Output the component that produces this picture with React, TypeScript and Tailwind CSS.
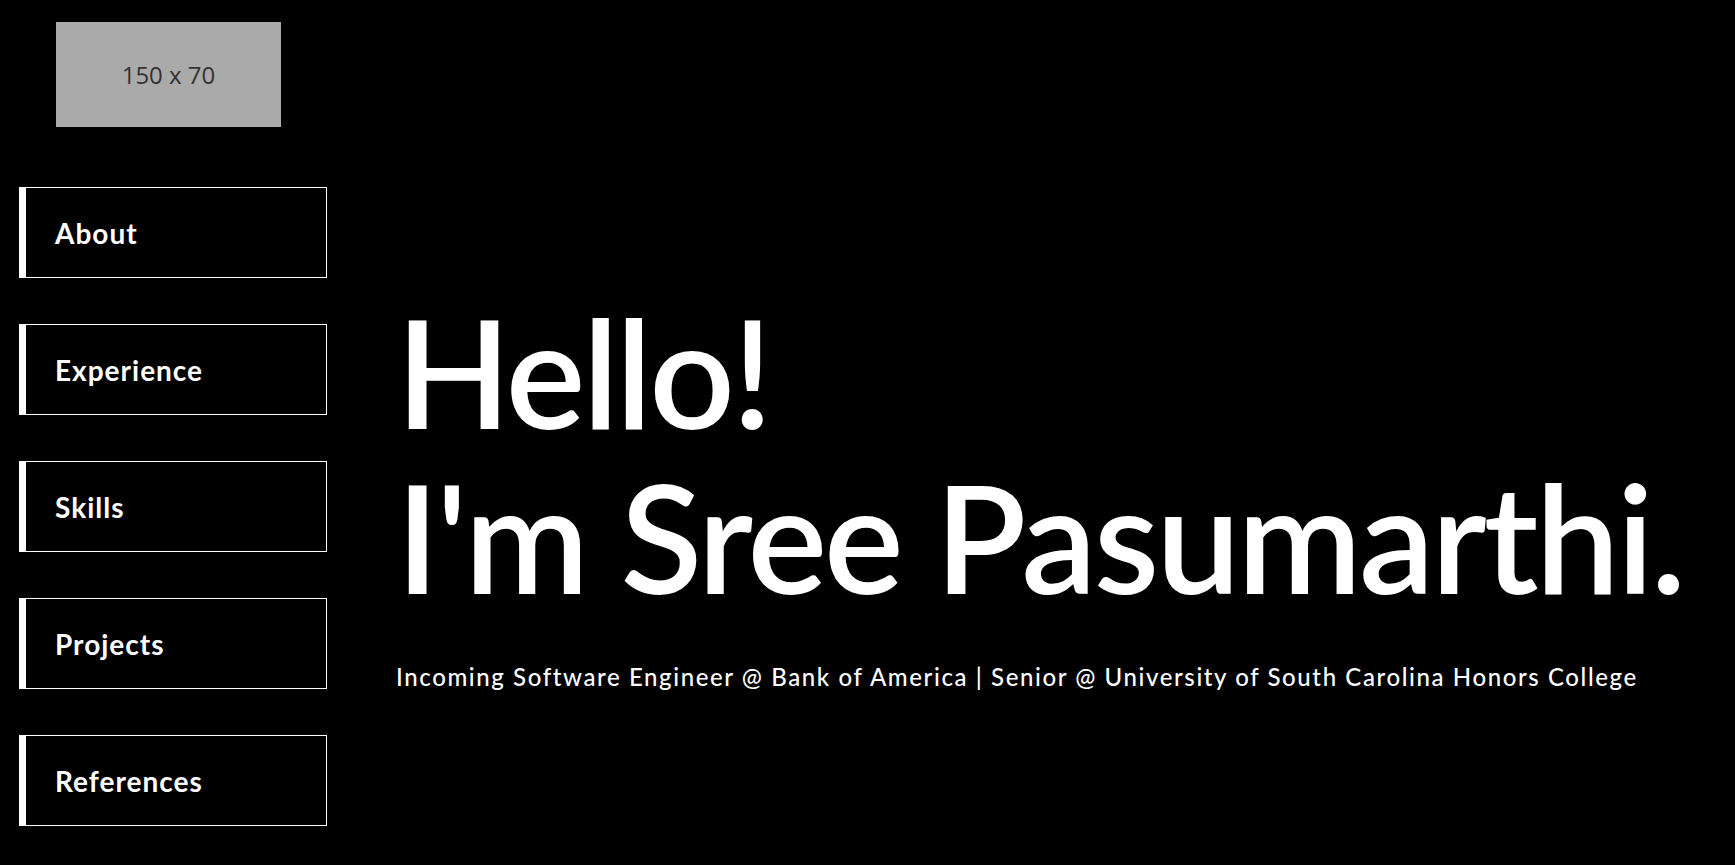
const navItems = ['About', 'Experience', 'Skills', 'Projects', 'References']

function NavButton({ label }: { label: string }) {
  return (
    <a
      href={`#${label.toLowerCase()}`}
      className="flex h-[91px] w-[308px] items-center border border-l-[7px] border-white pl-[29px] text-[28px] font-bold tracking-[1px] text-white"
    >
      {label}
    </a>
  )
}

export default function App() {
  return (
    <div className="flex min-h-screen bg-black font-['Lato',sans-serif] text-white">
      <aside className="w-[345px] shrink-0">
        <div className="ml-[56px] mt-[22px] flex h-[105px] w-[225px] items-center justify-center bg-[#aaaaaa] font-['Open_Sans',sans-serif] text-[24px] text-[#333333]">
          150 x 70
        </div>
        <nav className="ml-[19px] mt-[60px] flex flex-col gap-[46px]">
          {navItems.map((item) => (
            <NavButton key={item} label={item} />
          ))}
        </nav>
      </aside>
      <main className="pl-[51px] pt-[289px]">
        <h1 className="text-[150px] font-semibold leading-[1.1] tracking-[-3px]">
          Hello!
          <br />
          I&apos;m Sree Pasumarthi.
        </h1>
        <p className="mt-[40px] text-[24px] font-medium leading-[1.5] tracking-[1.6px]">
          Incoming Software Engineer @ Bank of America | Senior @ University of South Carolina Honors College
        </p>
      </main>
    </div>
  )
}
